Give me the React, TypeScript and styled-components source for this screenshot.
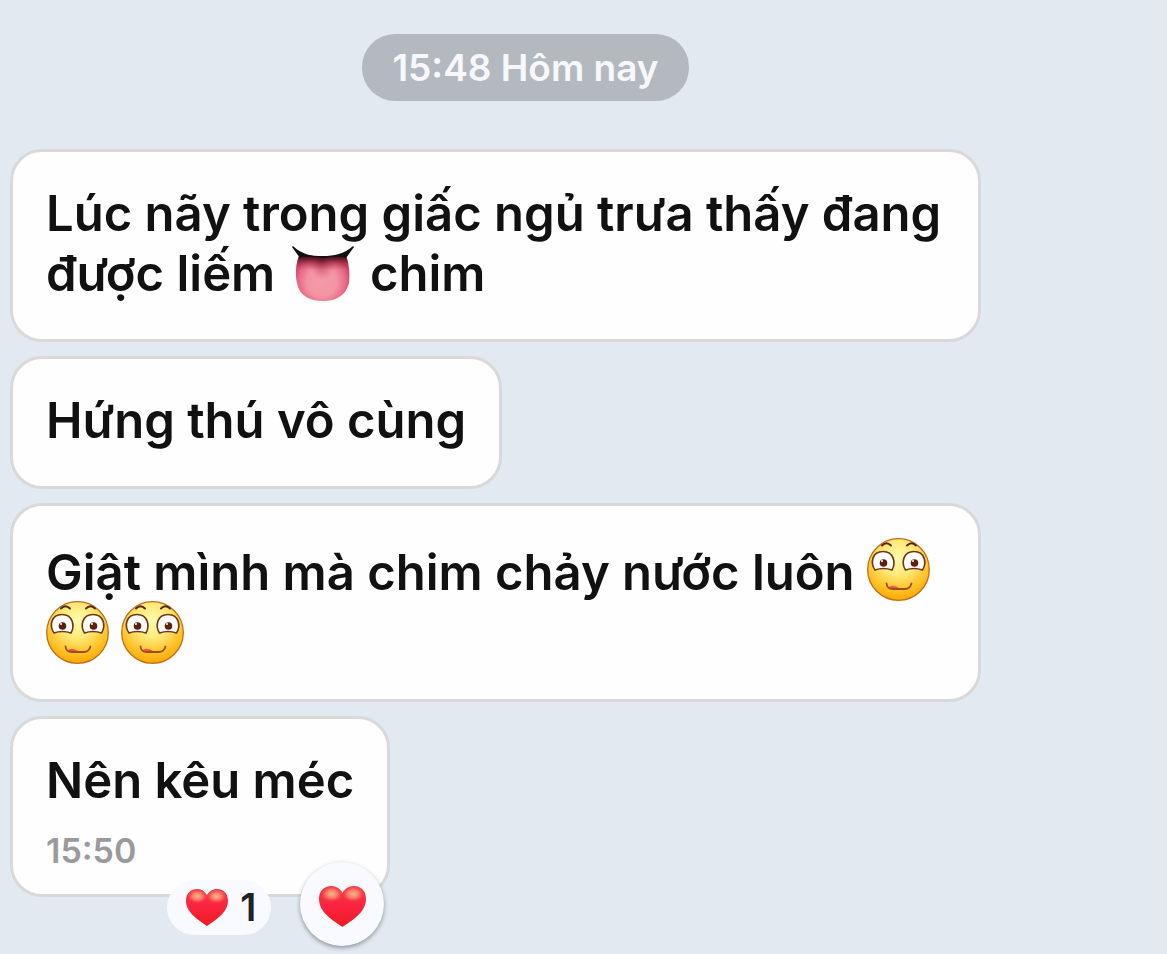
import React, { useId } from "react";
import styled, { createGlobalStyle } from "styled-components";

const GlobalStyle = createGlobalStyle`
  *, *::before, *::after { box-sizing: border-box; }
  body {
    margin: 0;
    background: #e2e9f1;
    color: #111112;
    font-family: Inter, "Liberation Sans", sans-serif;
    font-weight: 600;
  }
`;

const Conversation = styled.main`
  display: flex;
  flex-direction: column;
  min-height: 100vh;
  padding: 34px 186px 57px 10px;
`;

const DateChip = styled.time`
  align-self: center;
  margin: 0 0 48px 60px;
  padding: 0 30px;
  border-radius: 33px;
  background: #b4b9c0;
  color: #f6f8fb;
  font-size: 37px;
  line-height: 67px;
`;

const Messages = styled.ol`
  display: flex;
  flex-direction: column;
  align-items: flex-start;
  gap: 14px;
  margin: 0;
  padding: 0;
  list-style: none;
`;

const Bubble = styled.li<{ $emotes?: boolean; $timed?: boolean }>`
  position: relative;
  max-width: 971px;
  padding: 32px 33px ${(p) => (p.$timed ? 23 : 35)}px;
  border: 3px solid #d9d9da;
  border-radius: 32px;
  background: #fefefe;
  font-size: 49px;
  line-height: ${(p) => (p.$emotes ? 56 : 60)}px;
`;

const MessageText = styled.p`
  margin: 0;
`;

const SentTime = styled.time`
  display: block;
  margin-top: 20px;
  color: #999a9c;
  font-size: 34px;
  line-height: 40px;
`;

const Glyph = styled.svg<{ $w: number; $h: number }>`
  flex: none;
  width: ${(p) => p.$w}px;
  height: ${(p) => p.$h}px;
`;

const InlineGlyph = styled(Glyph)<{ $gap?: number }>`
  margin: 0 ${(p) => p.$gap ?? 0}px;
  vertical-align: -11px;
`;

const Reactions = styled.div`
  position: absolute;
  right: 3px;
  bottom: -52px;
  display: flex;
  align-items: center;
  gap: 29px;
`;

const ReactionCount = styled.button`
  display: flex;
  align-items: center;
  gap: 12px;
  height: 55px;
  margin-top: 6px;
  padding: 0 15px 0 19px;
  border: 0;
  border-radius: 28px;
  background: #f8faff;
  color: #222224;
  font: inherit;
  font-size: 38px;
  line-height: 55px;
`;

const ReactionButton = styled.button`
  display: flex;
  align-items: center;
  justify-content: center;
  width: 84px;
  height: 84px;
  padding: 4px 0 0;
  border: 0;
  border-radius: 50%;
  background: #f8faff;
  box-shadow: 0 2px 4px rgba(60, 68, 80, 0.5);
`;

function Tongue() {
  const id = useId();
  const shape = "M7 10C4 17 3 28 5 37C7 49 17 55 31 55C45 55 54 49 57 37C58 28 57 17 54 10Z";
  return (
    <InlineGlyph $w={62} $h={56} $gap={4} viewBox="0 0 62 56" role="img" aria-label="Lưỡi">
      <defs>
        <radialGradient id={id} cx="30" cy="36" r="29" gradientUnits="userSpaceOnUse">
          <stop offset="0" stopColor="#f49aa9" />
          <stop offset=".5" stopColor="#f394a4" />
          <stop offset=".8" stopColor="#e86c85" />
          <stop offset="1" stopColor="#cf4765" />
        </radialGradient>
        <linearGradient id={id + "s"} x1="0" y1="8" x2="0" y2="24" gradientUnits="userSpaceOnUse">
          <stop offset="0" stopColor="#160004" />
          <stop offset=".3" stopColor="#4d0c1c" stopOpacity=".8" />
          <stop offset="1" stopColor="#c53153" stopOpacity="0" />
        </linearGradient>
        <radialGradient id={id + "c"} gradientUnits="userSpaceOnUse" cx="0" cy="0" r="1" gradientTransform="translate(30 13) scale(14 21)">
          <stop offset="0" stopColor="#8c1f3b" stopOpacity=".9" />
          <stop offset="1" stopColor="#d8506d" stopOpacity="0" />
        </radialGradient>
      </defs>
      <path d={shape} fill={`url(#${id})`} />
      <path d={shape} fill={`url(#${id}c)`} />
      <path d={shape} fill={`url(#${id}s)`} />
      <path d="M0 1L1 0C10 9 20 10 31 10C42 10 52 8 61 0L62 1L54 12C46 10 39 11 31 12C22 11 15 10 8 12Z" fill="#111112" />
    </InlineGlyph>
  );
}

function Smirk() {
  const id = useId();
  return (
    <InlineGlyph $w={63} $h={63} viewBox="0 0 63 63" role="img" aria-label="Mặt cười">
      <defs>
        <radialGradient id={id} cx="31" cy="20" r="43" gradientUnits="userSpaceOnUse">
          <stop offset="0" stopColor="#fffbb0" />
          <stop offset=".4" stopColor="#ffe977" />
          <stop offset=".72" stopColor="#ffc52e" />
          <stop offset="1" stopColor="#ffa600" />
        </radialGradient>
      </defs>
      <circle cx="31.5" cy="31.5" r="30.8" fill={`url(#${id})`} stroke="#bd7016" strokeWidth="1.3" />
      <path d="M8 32C3 25 5 13.5 16 13.5C27 13.5 29 25 25 32Q16 29 8 32ZM38.500 32C34 25 36 13.5 47 13.5C58 13.5 60 25 55.500 32Q47 29 38.500 32Z" fill="#fff" stroke="#6f3614" strokeWidth="1.6" strokeLinejoin="round" />
      <g fill="#5c1f10">
        <circle cx="16.5" cy="25" r="3.8" />
        <circle cx="47.5" cy="25" r="3.8" />
      </g>
      <g fill="#fff">
        <circle cx="15" cy="23" r="1" />
        <circle cx="46" cy="23" r="1" />
      </g>
      <path d="M15 7.5Q19.500 3 24 7.500M40 7.500Q44.500 3 49 7.500" fill="none" stroke="#53230f" strokeWidth="1.9" strokeLinecap="round" />
      <path d="M21 49.500Q26 45.500 33 50.500Q26 52 21 49.500Z" fill="#f2525b" />
      <path d="M19.500 45.500Q20 51 26 51H38Q43 51 44.500 45.500" fill="none" stroke="#a04c14" strokeWidth="1.800" strokeLinecap="round" />
    </InlineGlyph>
  );
}

function Heart({ width, height }: { width: number; height: number }) {
  const id = useId();
  return (
    <Glyph $w={width} $h={height} viewBox="0 0 46 41" preserveAspectRatio="none" aria-hidden="true">
      <defs>
        <linearGradient id={id} x1="0" y1="0" x2="0" y2="1">
          <stop offset="0" stopColor="#f13a43" />
          <stop offset=".5" stopColor="#fb233f" />
          <stop offset="1" stopColor="#ee1a21" />
        </linearGradient>
        <radialGradient id={id + "g"}>
          <stop offset="0" stopColor="#ffc58f" stopOpacity=".9" />
          <stop offset=".5" stopColor="#ff9c7c" stopOpacity=".7" />
          <stop offset="1" stopColor="#ff5b58" stopOpacity="0" />
        </radialGradient>
      </defs>
      <path d="M23 41C15 35 0 27 0 13C0 5 5 0 12 0C17 0 21 3 23 7C25 3 29 0 34 0C41 0 46 5 46 13C46 27 31 35 23 41Z" fill={`url(#${id})`} />
      <ellipse cx="12.500" cy="8" rx="11" ry="8" fill={`url(#${id}g)`} />
      <ellipse cx="33.500" cy="8" rx="11" ry="8" fill={`url(#${id}g)`} />
    </Glyph>
  );
}

export default function App() {
  return (
    <>
      <GlobalStyle />
      <Conversation>
        <DateChip>15:48 Hôm nay</DateChip>
        <Messages>
          <Bubble>
            <MessageText>
              Lúc nãy trong giấc ngủ trưa thấy đang được liếm <Tongue /> chim
            </MessageText>
          </Bubble>
          <Bubble>
            <MessageText>Hứng thú vô cùng</MessageText>
          </Bubble>
          <Bubble $emotes>
            <MessageText>
              Giật mình mà chim chảy nước luôn <Smirk /> <Smirk /> <Smirk />
            </MessageText>
          </Bubble>
          <Bubble $timed>
            <MessageText>Nên kêu méc</MessageText>
            <SentTime>15:50</SentTime>
            <Reactions>
              <ReactionCount type="button">
                <Heart width={42} height={37} />1
              </ReactionCount>
              <ReactionButton type="button" aria-label="Thả tim">
                <Heart width={47} height={41} />
              </ReactionButton>
            </Reactions>
          </Bubble>
        </Messages>
      </Conversation>
    </>
  );
}
